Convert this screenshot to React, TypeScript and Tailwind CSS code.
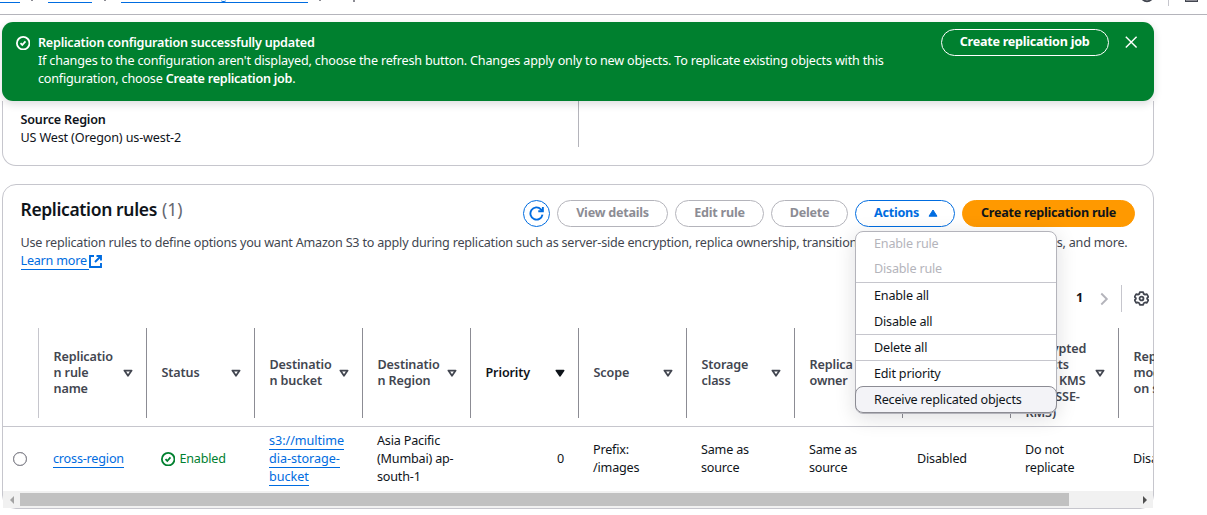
import type { ReactNode } from "react";
import clsx from "clsx";

function CheckCircle() {
  return (
    <svg className="size-[14.4px] shrink-0" viewBox="0 0 16 16" fill="none" stroke="currentColor" strokeWidth="2">
      <circle cx="8" cy="8" r="7" />
      <path d="m5 8 2 2 3.5-4" />
    </svg>
  );
}

function SortIcon({ active }: { active?: boolean }) {
  return (
    <svg
      className={clsx("mr-[3px] size-[14px] shrink-0", active ? "text-[#0f141a]" : "text-[#424650]")}
      viewBox="0 0 14 14"
      fill={active ? "currentColor" : "none"}
      stroke="currentColor"
      strokeWidth="1.8"
      strokeLinejoin="round"
    >
      <path d="M3.4 4.6h7.200L7 9.700Z" />
    </svg>
  );
}

function Button({ children, className }: { children: ReactNode; className: string }) {
  return (
    <button
      className={clsx(
        "flex h-[27px] shrink-0 items-center justify-center rounded-full border-[1.5px] pb-px font-bold tracking-[-0.25px] whitespace-nowrap",
        className,
      )}
    >
      {children}
    </button>
  );
}

const linkStyle = "border-b border-[#006ce0] text-[#006ce0]";

type Column = {
  title: string[];
  cell: ReactNode;
  active?: boolean;
  right?: boolean;
};

const columns: Column[] = [
  {
    title: ["Replicatio", "n rule", "name"],
    cell: (
      <span>
        <a className={linkStyle}>cross-region</a>
      </span>
    ),
  },
  {
    title: ["Status"],
    cell: (
      <span className="flex items-center gap-1 text-[#00802f]">
        <CheckCircle />
        Enabled
      </span>
    ),
  },
  {
    title: ["Destinatio", "n bucket"],
    cell: (
      <span className="tracking-[-0.03px]">
        <a className={linkStyle}>s3://multime</a>
        <br />
        <a className={linkStyle}>dia-storage-</a>
        <br />
        <a className={linkStyle}>bucket</a>
      </span>
    ),
  },
  {
    title: ["Destinatio", "n Region"],
    cell: (
      <span>
        Asia Pacific
        <br />
        (Mumbai) ap-
        <br />
        south-1
      </span>
    ),
  },
  { title: ["Priority"], cell: "0", active: true, right: true },
  {
    title: ["Scope"],
    cell: (
      <span>
        Prefix:
        <br />
        /images
      </span>
    ),
  },
  {
    title: ["Storage", "class"],
    cell: (
      <span>
        Same as
        <br />
        source
      </span>
    ),
  },
  {
    title: ["Replica", "owner"],
    cell: (
      <span>
        Same as
        <br />
        source
      </span>
    ),
  },
  { title: ["Replication", "Time", "Control"], cell: "Disabled" },
  {
    title: ["Encrypted", "objects", "(AWS KMS", "with SSE-", "KMS)"],
    cell: (
      <span>
        Do not
        <br />
        replicate
      </span>
    ),
  },
  { title: ["Replica", "modificati", "on sync"], cell: "Disabled" },
];

function MenuDivider() {
  return <div className="h-px shrink-0 bg-[#c6c6cd]" />;
}

function ActionsMenu() {
  return (
    <div className="absolute top-[31px] left-0 z-20 flex h-[183px] w-[202px] flex-col rounded-lg border-[1.5px] border-[#b4b4bb] bg-white font-normal text-[#0f141a] shadow-[0_4px_20px_1px_rgba(0,7,22,0.12)]">
      <div className="flex h-[24px] shrink-0 items-center pl-[18px] text-[#b4b4bb]">Enable rule</div>
      <div className="flex h-[26px] shrink-0 items-center pl-[18px] text-[#b4b4bb]">Disable rule</div>
      <MenuDivider />
      <div className="flex h-[26px] shrink-0 items-center pl-[18px]">Enable all</div>
      <div className="flex h-[25px] shrink-0 items-center pl-[18px]">Disable all</div>
      <MenuDivider />
      <div className="flex h-[25px] shrink-0 items-center pl-[18px]">Delete all</div>
      <MenuDivider />
      <div className="flex h-[25px] shrink-0 items-center pt-px pl-[18px]">Edit priority</div>
      <div className="-mx-px flex h-[27px] shrink-0 items-center rounded-lg border-[1.5px] border-[#8c8c94] bg-[#f3f3f7] pl-[18px]">
        Receive replicated objects
      </div>
    </div>
  );
}

function Breadcrumbs() {
  return (
    <header className="flex h-[15px] w-full shrink-0 items-start border-b border-[#b4b4bb]">
      <div className="flex h-[14px] w-[400px] items-start overflow-hidden">
        <div className="h-[3px] w-5 border-b border-[#006ce0]" />
        <div className="ml-[11px] h-px w-[2px] bg-[#8c8c94]" />
        <div className="ml-[15px] h-[3px] w-11 border-b border-[#006ce0]" />
        <div className="ml-[12px] h-px w-[2px] bg-[#8c8c94]" />
        <div className="ml-[15px] flex h-[3px] w-[187px] border-b border-[#006ce0] pl-[100px]">
          <div className="h-[2px] w-[5px] rounded-b-full border-b border-[#006ce0]" />
        </div>
        <div className="ml-[11px] h-px w-[2px] bg-[#8c8c94]" />
        <div className="ml-[32px] h-[2px] w-[1.5px] bg-[#8c8c94]" />
      </div>
      <div className="ml-auto flex items-start">
        <svg className="h-[3px] w-[12px]" viewBox="0 0 12 3" fill="none" stroke="#424650" strokeWidth="1.8">
          <path d="M1-1Q6 3.500 11-1" />
        </svg>
        <div className="ml-[15px] h-[6px] w-px bg-[#c6c6cd]" />
        <div className="mr-[9px] ml-[16px] h-[2px] w-[13px] border-x-[1.5px] border-b-[1.5px] border-[#424650] bg-[#8c8c94]" />
      </div>
    </header>
  );
}

function Flash() {
  return (
    <section className="relative z-10 mt-[7px] ml-[2px] flex h-[79px] w-[1152px] shrink-0 items-start rounded-[11px] bg-[#00802f] pt-[7px] pl-[14px] text-white shadow-[0_3px_9px_rgba(0,7,22,0.14)]">
      <div className="mt-[7px]">
        <CheckCircle />
      </div>
      <div className="mt-[5px] ml-[7.6px] whitespace-nowrap">
        <div className="font-semibold tracking-[-0.22px]">Replication configuration successfully updated</div>
        <div>
          If changes to the configuration aren't displayed, choose the refresh button. Changes apply only to new
          objects. To replicate existing objects with this
          <br />
          configuration, choose <b className="font-semibold tracking-[-0.25px]">Create replication job</b>.
        </div>
      </div>
      <Button className="mr-[15px] ml-auto w-[168px] border-white">Create replication job</Button>
      <svg className="mt-[6px] mr-[16px] size-[14.4px]" viewBox="0 0 16 16" stroke="currentColor" strokeWidth="1.6">
        <path d="m2 2 12 12M14 2 2 14" />
      </svg>
    </section>
  );
}

export default function App() {
  return (
    <div className="flex h-[515px] w-[1207px] flex-col overflow-hidden bg-white font-['Noto_Sans',sans-serif] text-[12.6px] leading-[18px] tracking-[-0.19px] text-[#0f141a]">
      <Breadcrumbs />
      <Flash />

      <section className="ml-[2px] flex h-[65px] w-[1152px] shrink-0 items-start rounded-b-[14px] border border-t-0 border-[#c6c6cd] pl-[17.500px]">
        <div className="mt-[9.5px] w-[557.500px]">
          <div className="font-semibold">Source Region</div>
          <div className="tracking-[-0.150px]">US West (Oregon) us-west-2</div>
        </div>
        <div className="h-[46px] w-px bg-[#b4b4bb]" />
      </section>

      <section className="mt-[18px] ml-[2px] flex h-[325px] w-[1152px] shrink-0 flex-col rounded-[14px] border border-[#c6c6cd]">
        <div className="flex h-[49px] shrink-0 items-start pr-[18px] pl-[17.500px]">
          <h2 className="mt-[13px] text-[17.5px] leading-[22px] font-semibold tracking-[-0.36px]">
            Replication rules <span className="ml-px font-normal tracking-normal text-[#656871]">(1)</span>
          </h2>
          <div className="mt-[15px] ml-auto flex gap-[7px]">
            <Button className="w-[27px] border-[#006ce0] text-[#006ce0]">
              <svg className="mt-px size-[15px]" viewBox="0 0 16 16" fill="none" stroke="currentColor" strokeWidth="2">
                <path d="M14.4 9.2A6.5 6.5 0 1 1 12.7 3.5l1.6 1.7" />
                <path d="M14.8 1v4.6h-4.9" />
              </svg>
            </Button>
            <Button className="w-[111px] border-[#b4b4bb] text-[#8c8c94]">View details</Button>
            <Button className="w-[89px] border-[#b4b4bb] text-[#8c8c94]">Edit rule</Button>
            <Button className="w-[77px] border-[#b4b4bb] text-[#8c8c94]">Delete</Button>
            <div className="relative">
              <Button className="w-[100px] gap-[9px] border-[#006ce0] pl-[2px] text-[#006ce0]">
                Actions
                <svg className="h-[8px] w-[10px]" viewBox="0 0 10 8" fill="currentColor" stroke="currentColor" strokeLinejoin="round">
                  <path d="M5 1 9 7.2H1Z" />
                </svg>
              </Button>
              <ActionsMenu />
            </div>
            <Button className="w-[173px] border-[#ff9900] bg-[#ff9900]">Create replication rule</Button>
          </div>
        </div>

        <div className="h-[51px] shrink-0 pl-[17.500px] tracking-[-0.215px] whitespace-nowrap text-[#424650]">
          Use replication rules to define options you want Amazon S3 to apply during replication such as server-side
          encryption, replica ownership, transitioning replicas to another storage class, and more.
          <div className="flex items-center">
            <a className="border-b border-[#006ce0] pr-[2px] leading-[17px] text-[#006ce0]">Learn more</a>
            <svg className="size-[13px] text-[#006ce0]" viewBox="0 0 13 13" fill="none" stroke="currentColor" strokeWidth="1.9">
              <path d="M5 1H1v11h11V8" />
              <path d="M7.5 1H12v4.5M12 1 6 7" />
            </svg>
          </div>
        </div>

        <div className="flex h-[27px] shrink-0 items-center justify-end pr-[4px]">
          <span className="mr-[14px] pb-px font-bold">1</span>
          <svg className="mr-[10px] size-[14px] text-[#b4b4bb]" viewBox="0 0 14 14" fill="none" stroke="currentColor" strokeWidth="1.9">
            <path d="m4.3 1.5 5.5 5.5-5.5 5.5" />
          </svg>
          <div className="mr-[12px] h-[27px] w-px bg-[#c6c6cd]" />
          <svg className="size-[15px] text-[#424650]" viewBox="0 0 16 16" fill="none" stroke="currentColor" strokeWidth="1.900" strokeLinejoin="round">
            <path d="M6.2 1.2h3.6l.5 1.9 1.5.8 1.9-.5 1.6 2.9L14 7.7v.8l1.3 1.3-1.6 2.9-1.9-.5-1.5.8-.5 1.8H6.2L5.700 13l-1.500-.8-1.900.5L.7 9.800 2 8.500v-.8L.7 6.300l1.600-2.900 1.900.5 1.500-.8Z" />
            <circle cx="8" cy="8" r="2.100" />
          </svg>
        </div>

        <div className="-mx-px flex h-[115px] shrink-0 overflow-hidden border-b border-[#c6c6cd] pl-9">
          {columns.map((column, index) => (
            <div key={index} className="flex w-[108px] shrink-0 items-center pt-[7px]">
              <div className={clsx("h-[90px] w-px shrink-0", index === 0 ? "bg-[#c6c6cd]" : "bg-[#8c8c94]")} />
              <div
                className={clsx(
                  "ml-[14.500px] flex w-full items-center justify-between font-semibold tracking-[-0.130px]",
                  column.active ? "text-[#0f141a]" : "text-[#424650]",
                )}
              >
                <div className="h-max max-h-16 leading-4 whitespace-nowrap">
                  {column.title.map((line) => (
                    <div key={line}>{line}</div>
                  ))}
                </div>
                <div className="mr-[8px] flex">
                  <SortIcon active={column.active} />
                </div>
              </div>
            </div>
          ))}
        </div>

        <div className="flex h-[64px] shrink-0 items-center overflow-hidden">
          <span className="mb-px ml-[10px] size-[14px] shrink-0 rounded-full border-[1.500px] border-[#8c8c94] outline-[0.5px] -outline-offset-1 outline-[#8c8c94]" />
          <div className="ml-[11px] flex">
            {columns.map((column, index) => (
              <div
                key={index}
                className={clsx("flex w-[108px] shrink-0 items-center pl-[15px]", column.right && "justify-end pr-[14px]")}
              >
                {column.cell}
              </div>
            ))}
          </div>
        </div>

        <div className="relative flex h-[17px] shrink-0 items-center justify-between bg-[#f1f1f1]">
          <svg className="ml-[5px] size-[8px]" viewBox="0 0 8 8" fill="#a3a3a3">
            <path d="M6 0v8L2 4Z" />
          </svg>
          <div className="mr-auto ml-[4px] h-[13px] w-[1049px] bg-[#c1c1c1]" />
          <svg className="mr-[4px] size-[8px]" viewBox="0 0 8 8" fill="#505050">
            <path d="M2 0v8l4-4Z" />
          </svg>
        </div>
      </section>
    </div>
  );
}
